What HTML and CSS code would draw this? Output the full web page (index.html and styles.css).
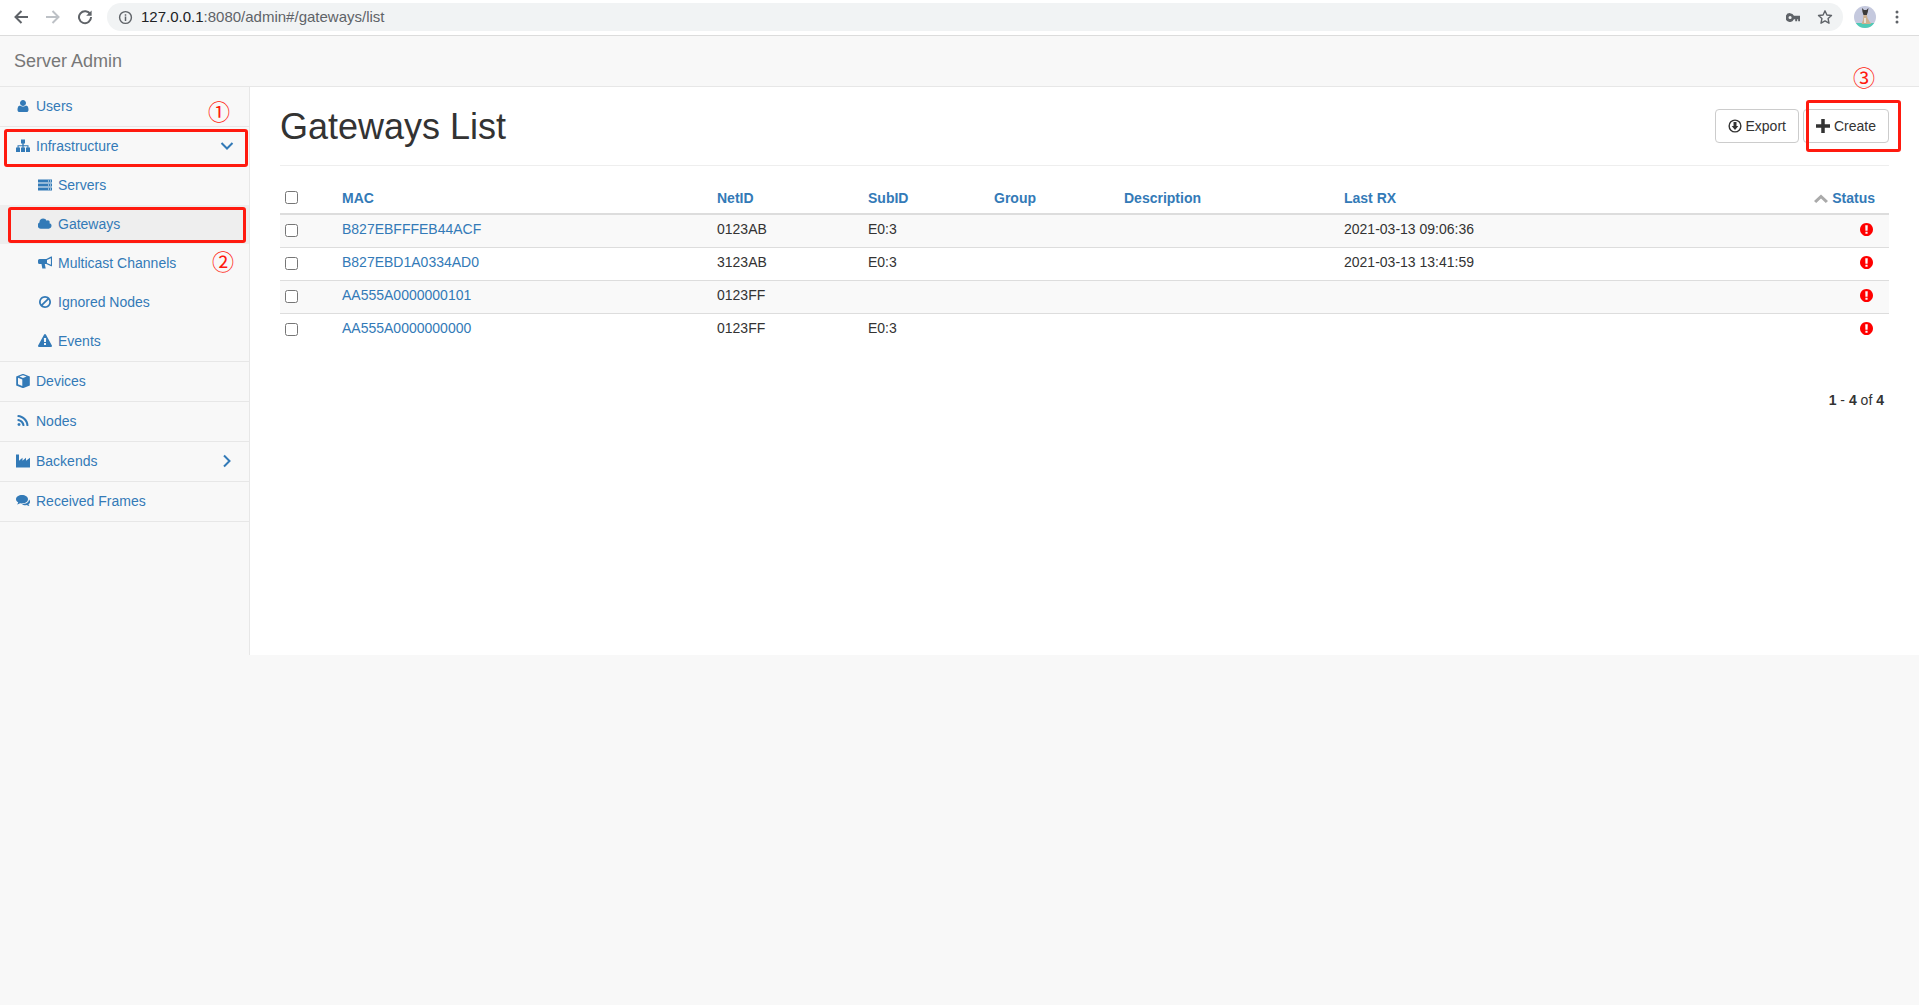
FILE: index.html
```html
<!DOCTYPE html>
<html lang="en">
<head>
<meta charset="utf-8">
<title>Server Admin</title>
<link rel="stylesheet" href="styles.css">
</head>
<body>
<header class="chrome">
  <svg class="cicon" viewBox="0 0 16 16"><path class="cs dark" d="M15 8H2.800M8.500 2 2.500 8l6 6"/></svg>
  <svg class="cicon" viewBox="0 0 16 16"><path class="cs light" d="M1 8h12.200M7.500 2l6 6-6 6"/></svg>
  <svg class="cicon" viewBox="0 0 16 16"><path class="cs dark" d="M13.300 5.400A6 6 0 1 0 14 8"/><path class="cf" d="M14.600 1.400v5.400H9.200z"/></svg>
  <div class="omnibox">
    <svg class="info" viewBox="0 0 16 16"><circle cx="8" cy="8" r="6.300" class="ci"/><path class="cf" d="M7.200 7h1.600v4.600H7.200zM7.200 4.400h1.600V6H7.200z"/></svg>
    <span class="url"><span class="host">127.0.0.1</span>:8080/admin#/gateways/list</span>
    <span class="spacer"></span>
    <svg class="key" viewBox="0 0 14.400 9"><path class="cf" d="M4.200 0a4.500 4.500 0 1 0 4 6.400H9.500V8.400h2V6.400h1V8.400h1.900V2.700H8.200A4.500 4.500 0 0 0 4.200 0zm0 2.900a1.600 1.600 0 1 1 0 3.200 1.600 1.600 0 0 1 0-3.200z"/></svg>
    <svg class="star" viewBox="0 0 16 16"><path class="st" d="M8 1.800l1.900 4.200 4.600.5-3.400 3.100.9 4.600L8 11.900l-4 2.300.9-4.600L1.500 6.500l4.600-.5z"/></svg>
  </div>
  <svg class="avatar" viewBox="0 0 22 22">
    <clipPath id="avclip"><circle cx="11" cy="11" r="11"/></clipPath>
    <g clip-path="url(#avclip)">
      <rect width="22" height="22" fill="#c5c9de"/>
      <rect y="17" width="22" height="5" fill="#4ecbb6"/>
      <path fill="#3c3a3a" d="M8 2l2 2h2.500l2-2-.7 4-1 3H9.500l-1-3z"/>
      <path fill="#cdb08f" d="M9.500 9h3.300l.7 3 2 3.500 2 2.500H7.500l1.500-4z"/>
      <path fill="#e9e2d4" d="M10 12h2v5h-2z"/>
    </g>
  </svg>
  <svg class="dots" viewBox="0 0 4 16"><circle cx="2" cy="3" r="1.500"/><circle cx="2" cy="8" r="1.500"/><circle cx="2" cy="13" r="1.500"/></svg>
</header>

<nav class="navbar"><a class="brand">Server Admin</a></nav>

<div class="layout">
  <aside class="sidebar">
    <ul class="menu">
      <li class="item"><a class="link"><svg class="fa" viewBox="0 0 1792 1792"><path d="M1600 1405q0 120-73 189.500t-194 69.500h-874q-121 0-194-69.500t-73-189.500q0-53 3.500-103.500t14-109 26.500-108.500 43-97.500 62-81 85.500-53.500 111.500-20q9 0 42 21.500t74.500 48 108 48 133.500 21.500 133.500-21.500 108-48 74.500-48 42-21.500q61 0 111.500 20t85.500 53.500 62 81 43 97.500 26.500 108.500 14 109 3.500 103.500zm-320-893q0 159-112.500 271.500t-271.500 112.500-271.500-112.500-112.500-271.500 112.500-271.500 271.500-112.500 271.500 112.500 112.500 271.500z"/></svg>Users</a></li>
      <li class="item">
        <a class="link"><svg class="fa" viewBox="1 1 14 14"><path d="M6 1.500h4v4H8.700v1.700h4.800v2.300H15v4.500h-4V9.500h1.400V8.300H8.600v1.200H10v4.500H6V9.500h1.400V8.300H3.600v1.200H5v4.500H1V9.500h1.500V7.200h4.800V5.500H6z"/></svg>Infrastructure<svg class="chev" viewBox="0 0 14 14"><path d="M1.500 4 7 9.500 12.500 4"/></svg></a>
        <ul class="sub">
          <li><a class="sublink"><svg class="fa" viewBox="1 1 14 14"><path fill-rule="evenodd" d="M1 2.500h14v3H1zM1 6.500h14v3H1zM1 10.500h14v3H1zM11 3.500v1h1v-1zM13 3.500v1h1v-1zM11 7.500v1h1v-1zM13 7.500v1h1v-1zM11 11.500v1h1v-1zM13 11.500v1h1v-1z"/></svg>Servers</a></li>
          <li><a class="sublink current"><svg class="fa" viewBox="0 0 1920 1792"><path d="M1856 1152q0 159-112.500 271.500t-271.500 112.500h-1088q-185 0-316.500-131.500t-131.500-316.500q0-132 71-241.500t187-163.500q-2-28-2-43 0-212 150-362t362-150q158 0 286.500 88t187.500 230q70-62 166-62 106 0 181 75t75 181q0 75-41 138 129 30 213 134.500t84 239.500z"/></svg>Gateways</a></li>
          <li><a class="sublink"><svg class="fa" viewBox="1 1 14 14"><path fill-rule="evenodd" d="M15 1.500v9.800h-.9L9.300 9H7.800l.9 4.500H5.300L4.500 9H2.500A1.500 1.500 0 0 1 1 7.500v-2A1.500 1.500 0 0 1 2.500 4h6.800l4.800-2.500zM13.900 3.300 10 5.100v2.800l3.900 1.800z"/></svg>Multicast Channels</a></li>
          <li><a class="sublink"><svg class="fa" viewBox="0 0 1792 1792"><path d="M1440 893q0-161-87-295l-754 753q137 89 297 89 111 0 211.500-43.500t173.500-116.500 116-174.500 43-212.500zm-999 299l755-754q-135-91-300-91-148 0-273 73t-198 199-73 274q0 162 89 299zm1223-299q0 157-61 300t-163.500 246-245 164-298.500 61-298.500-61-245-164-163.500-246-61-300 61-299.500 163.500-245.500 245-164 298.500-61 298.500 61 245 164 163.500 245.500 61 299.500z"/></svg>Ignored Nodes</a></li>
          <li><a class="sublink"><svg class="fa" viewBox="0 0 1792 1792"><path d="M1024 1375v-190q0-14-9.500-23.500t-22.500-9.500h-192q-13 0-22.500 9.500t-9.500 23.500v190q0 14 9.500 23.500t22.500 9.500h192q13 0 22.500-9.500t9.500-23.500zm-2-374l18-459q0-12-10-19-13-11-24-11h-220q-11 0-24 11-10 7-10 21l17 457q0 10 10 16.500t24 6.500h185q14 0 23.500-6.500t10.500-16.500zm-14-934l768 1408q35 63-2 126-17 29-46.500 46t-63.500 17h-1536q-34 0-63.500-17t-46.500-46q-37-63-2-126l768-1408q17-31 47-49t65-18 65 18 47 49z"/></svg>Events</a></li>
        </ul>
      </li>
      <li class="item"><a class="link"><svg class="fa" viewBox="1 1 14 14"><path fill-rule="evenodd" d="M8 .8l6.800 2.700v9L8 15.200 1.200 12.500v-9zM3 4.700v6.600l4.300 1.800V6.500zM4.400 3.600 8 5l3.600-1.400L8 2.200z"/></svg>Devices</a></li>
      <li class="item"><a class="link"><svg class="fa" viewBox="0 0 1792 1792"><path d="M576 1344q0 80-56 136t-136 56-136-56-56-136 56-136 136-56 136 56 56 136zm512 123q2 28-17 48-18 21-47 21h-135q-25 0-43-16.500t-20-41.500q-22-229-184.500-391.500t-391.500-184.500q-25-2-41.500-20t-16.500-43v-135q0-29 21-47 17-17 43-17h5q160 13 306 80.500t259 181.500q114 113 181.500 259t80.500 306zm512 2q2 27-18 47-18 20-46 20h-143q-26 0-44.500-17.500t-19.500-42.500q-12-215-101-408.500t-231.500-336-336-231.500-408.500-102q-25-1-42.500-19.500t-17.500-43.500v-143q0-28 20-46 18-18 44-18h3q262 13 501.500 120t425.500 294q187 186 294 425.500t120 501.500z"/></svg>Nodes</a></li>
      <li class="item"><a class="link"><svg class="fa" viewBox="1 1 14 14"><path d="M1 1.500h3v6.300l3.500-3v3l3.500-3v3l4-3V14.500H1z"/></svg>Backends<svg class="chev" viewBox="0 0 14 14"><path d="M4 1.500 9.500 7 4 12.500"/></svg></a></li>
      <li class="item"><a class="link"><svg class="fa" viewBox="1 1 14 14"><path d="M7 2c3.300 0 6 1.800 6 4.200S10.300 10.400 7 10.400c-.7 0-1.300-.1-1.900-.2-.9.700-2 1.100-3.100 1.200.6-.6 1-1.300 1.200-2.100C1.900 8.600 1 7.500 1 6.200 1 3.800 3.700 2 7 2z"/><path d="M14 6.500c.7.600 1.100 1.400 1.100 2.200 0 1-.5 1.900-1.600 2.500.2.700.6 1.300 1 1.800-1-.1-1.900-.5-2.700-1-.5.1-1 .2-1.500.2-1.300 0-2.500-.4-3.300-1 3.800 0 7-1.900 7-4.700z"/></svg>Received Frames</a></li>
    </ul>
  </aside>

  <main class="content">
    <div class="page-header">
      <h1 class="title">Gateways List</h1>
      <div class="actions">
        <button class="btn"><svg class="btn-icon" viewBox="0 0 16 16"><circle cx="8" cy="8" r="6.700" class="ring"/><path class="btn-fill" d="M6.300 3.500h3.400v4.500h2.100L8 12.500 4.200 8h2.100z"/></svg>Export</button>
        <button class="btn"><svg class="btn-icon" viewBox="0 0 16 16"><path class="btn-fill" d="M6 0h4v6h6v4h-6v6H6v-6H0V6h6z"/></svg>Create</button>
      </div>
    </div>

    <table class="grid">
      <colgroup>
        <col class="c-check"><col class="c-mac"><col class="c-net"><col class="c-sub"><col class="c-group"><col class="c-desc"><col class="c-rx"><col class="c-status">
      </colgroup>
      <thead>
        <tr>
          <th class="check"><input type="checkbox"></th>
          <th>MAC</th><th>NetID</th><th>SubID</th><th>Group</th><th>Description</th><th>Last RX</th>
          <th class="status"><svg class="sort" viewBox="0 0 14 9"><path d="M7 .5 14 7 11.800 9 7 4.500 2.200 9 0 7z"/></svg>Status</th>
        </tr>
      </thead>
      <tbody>
        <tr><td class="check"><input type="checkbox"></td><td><a class="mac">B827EBFFFEB44ACF</a></td><td>0123AB</td><td>E0:3</td><td></td><td></td><td>2021-03-13 09:06:36</td><td class="state"><svg class="alert" viewBox="128 128 1536 1536"><path d="M896 128q209 0 385.500 103t279.500 279.500 103 385.500-103 385.500-279.500 279.500-385.500 103-385.500-103-279.500-279.500-103-385.500 103-385.500 279.500-279.500 385.500-103zm128 1247v-190q0-14-9-23.500t-22-9.500h-192q-13 0-23 10t-10 23v190q0 13 10 23t23 10h192q13 0 22-9.500t9-23.500zm-2-344l18-621q0-12-10-18-10-8-24-8h-220q-14 0-24 8-10 6-10 18l17 621q0 10 10 17.500t24 7.500h185q14 0 23.500-7.500t10.500-17.500z"/></svg></td></tr>
        <tr><td class="check"><input type="checkbox"></td><td><a class="mac">B827EBD1A0334AD0</a></td><td>3123AB</td><td>E0:3</td><td></td><td></td><td>2021-03-13 13:41:59</td><td class="state"><svg class="alert" viewBox="128 128 1536 1536"><path d="M896 128q209 0 385.500 103t279.500 279.500 103 385.500-103 385.500-279.500 279.500-385.500 103-385.500-103-279.500-279.500-103-385.500 103-385.500 279.500-279.500 385.500-103zm128 1247v-190q0-14-9-23.500t-22-9.500h-192q-13 0-23 10t-10 23v190q0 13 10 23t23 10h192q13 0 22-9.500t9-23.500zm-2-344l18-621q0-12-10-18-10-8-24-8h-220q-14 0-24 8-10 6-10 18l17 621q0 10 10 17.500t24 7.500h185q14 0 23.500-7.500t10.500-17.500z"/></svg></td></tr>
        <tr><td class="check"><input type="checkbox"></td><td><a class="mac">AA555A0000000101</a></td><td>0123FF</td><td></td><td></td><td></td><td></td><td class="state"><svg class="alert" viewBox="128 128 1536 1536"><path d="M896 128q209 0 385.500 103t279.500 279.500 103 385.500-103 385.500-279.500 279.500-385.500 103-385.500-103-279.500-279.500-103-385.500 103-385.500 279.500-279.500 385.500-103zm128 1247v-190q0-14-9-23.500t-22-9.500h-192q-13 0-23 10t-10 23v190q0 13 10 23t23 10h192q13 0 22-9.500t9-23.500zm-2-344l18-621q0-12-10-18-10-8-24-8h-220q-14 0-24 8-10 6-10 18l17 621q0 10 10 17.500t24 7.500h185q14 0 23.500-7.500t10.500-17.500z"/></svg></td></tr>
        <tr><td class="check"><input type="checkbox"></td><td><a class="mac">AA555A0000000000</a></td><td>0123FF</td><td>E0:3</td><td></td><td></td><td></td><td class="state"><svg class="alert" viewBox="128 128 1536 1536"><path d="M896 128q209 0 385.500 103t279.500 279.500 103 385.500-103 385.500-279.500 279.500-385.500 103-385.500-103-279.500-279.500-103-385.500 103-385.500 279.500-279.500 385.500-103zm128 1247v-190q0-14-9-23.500t-22-9.500h-192q-13 0-23 10t-10 23v190q0 13 10 23t23 10h192q13 0 22-9.500t9-23.500zm-2-344l18-621q0-12-10-18-10-8-24-8h-220q-14 0-24 8-10 6-10 18l17 621q0 10 10 17.500t24 7.500h185q14 0 23.500-7.500t10.500-17.500z"/></svg></td></tr>
      </tbody>
    </table>

    <div class="pager"><b>1</b> - <b>4</b> of <b>4</b></div>
  </main>
</div>

<div class="mark box-infra"></div>
<div class="mark box-gateways"></div>
<div class="mark box-create"></div>
<span class="num num-1">①</span>
<span class="num num-2">②</span>
<span class="num num-3">③</span>
</body>
</html>
```
FILE: styles.css
```css
* { box-sizing: border-box; }
html, body { margin: 0; padding: 0; }
body {
  background: #f8f8f8;
  color: #333;
  font: 14px/20px "Liberation Sans", Arial, sans-serif;
  height: 1005px;
  overflow: hidden;
  position: relative;
}
a { color: #337ab7; text-decoration: none; }
ul { list-style: none; margin: 0; padding: 0; }

/* browser toolbar */
.chrome {
  height: 36px;
  background: #fff;
  border-bottom: 1px solid #dcdcdc;
  display: flex;
  align-items: center;
  padding: 0 0 1px 13px;
}
.cicon { width: 16px; height: 16px; margin-right: 16px; flex: none; }
.cs { fill: none; stroke-width: 2; }
.cs.dark { stroke: #5f6368; }
.cs.light { stroke: #bdc1c6; }
.cf { fill: #5f6368; }
.ci { fill: none; stroke: #5f6368; stroke-width: 1.5; }
.st { fill: none; stroke: #5f6368; stroke-width: 1.4; stroke-linejoin: round; }
.omnibox {
  flex: none;
  width: 1736px;
  margin-left: -2px;
  height: 28px;
  background: #f1f3f4;
  border-radius: 14px;
  display: flex;
  align-items: center;
  padding: 0 10px 0 11px;
}
.info { width: 15px; height: 15px; flex: none; margin-right: 8px; }
.url { color: #5f6368; font-size: 15px; }
.host { color: #202124; }
.spacer { flex: 1; }
.key { width: 14px; height: 9px; margin-right: 17px; }
.star { width: 16px; height: 16px; margin-right: 0; }
.avatar { width: 22px; height: 22px; margin-left: 11px; flex: none; }
.dots { width: 4px; height: 16px; margin-left: 19px; fill: #5f6368; flex: none; }

/* navbar */
.navbar {
  height: 51px;
  background: #f8f8f8;
  border-bottom: 1px solid #e7e7e7;
  padding: 15px 14px;
}
.brand { color: #777; font-size: 18px; line-height: 20px; display: block; }

/* layout */
.layout { display: flex; height: 568px; }
.sidebar {
  width: 250px;
  flex: none;
  background: #f8f8f8;
  border-right: 1px solid #e7e7e7;
}
.item { border-bottom: 1px solid #e7e7e7; }
.link {
  display: flex;
  align-items: center;
  height: 39px;
  padding: 0 0 2px 15px;
}
.fa {
  width: 14px;
  height: 14px;
  margin: 0 6px 0 1px;
  flex: none;
  fill: #337ab7;
}
.chev {
  width: 14px;
  height: 14px;
  margin-left: auto;
  margin-right: 15px;
  fill: none;
  stroke: #337ab7;
  stroke-width: 2;
}
.sublink {
  display: flex;
  align-items: center;
  height: 39px;
  padding: 0 0 2px 37px;
}
.sublink.current { background: #eee; }

/* content */
.content {
  flex: 1;
  background: #fff;
  padding: 0 30px;
  min-width: 0;
}
.page-header {
  height: 79px;
  border-bottom: 1px solid #eee;
  display: flex;
  align-items: center;
  justify-content: space-between;
  padding-top: 1px;
}
.title {
  margin: 0;
  font-size: 36px;
  font-weight: 400;
  line-height: 40px;
  color: #333;
}
.actions { display: flex; gap: 4px; margin-top: -1px; }
.btn {
  height: 34px;
  padding: 0 12px;
  background: #fff;
  border: 1px solid #ccc;
  border-radius: 4px;
  color: #333;
  font: 14px/20px "Liberation Sans", Arial, sans-serif;
  display: flex;
  align-items: center;
}
.btn-icon { width: 14px; height: 14px; margin-right: 4px; }
.ring { fill: none; stroke: #333; stroke-width: 1.6; }
.btn-fill { fill: #333; }

/* table */
.grid {
  width: 100%;
  table-layout: fixed;
  border-collapse: collapse;
  margin-top: 11px;
}
.c-check { width: 54px; }
.c-mac { width: 375px; }
.c-net { width: 151px; }
.c-sub { width: 126px; }
.c-group { width: 130px; }
.c-desc { width: 220px; }
.c-rx { width: auto; }
.c-status { width: 140px; }
.grid th {
  text-align: left;
  font-weight: 700;
  color: #337ab7;
  padding: 11px 8px 5px;
  border-bottom: 2px solid #ddd;
  height: 37px;
}
.grid td {
  padding: 4px 8px 8px;
  border-bottom: 1px solid #ddd;
  height: 33px;
}
.grid tbody tr:nth-child(odd) { background: #f9f9f9; }
.grid tbody tr:last-child td { border-bottom: 0; }
.grid th.check { padding: 10px 0 6px 1px; }
.grid td.check { padding: 5px 0 7px 1px; }
.grid input { display: block; margin: 0 0 0 4px; }
.grid th.status { text-align: right; padding-right: 14px; }
.sort { width: 14px; height: 9px; fill: #aaa; margin-right: 4px; }
.grid td.state { text-align: right; padding-right: 16px; }
.alert { width: 13px; height: 13px; fill: #f00; display: inline-block; vertical-align: -2px; }

.pager { text-align: right; padding: 43px 5px 0 0; }

/* red annotations laid over the screenshot */
.mark {
  position: absolute;
  border: 3px solid #ff1a0f;
  border-radius: 3px;
  pointer-events: none;
}
.box-infra { left: 4px; top: 129px; width: 244px; height: 38px; }
.box-gateways { left: 8px; top: 207px; width: 238px; height: 36px; }
.box-create { left: 1806px; top: 100px; width: 95px; height: 52px; }
.num {
  position: absolute;
  color: #ff1a0f;
  font: 22px/22px "Noto Sans CJK SC", "DejaVu Sans", sans-serif;
  width: 22px;
  text-align: center;
}
.num-1 { left: 208px; top: 99px; }
.num-2 { left: 212px; top: 249px; }
.num-3 { left: 1853px; top: 65px; }
```
